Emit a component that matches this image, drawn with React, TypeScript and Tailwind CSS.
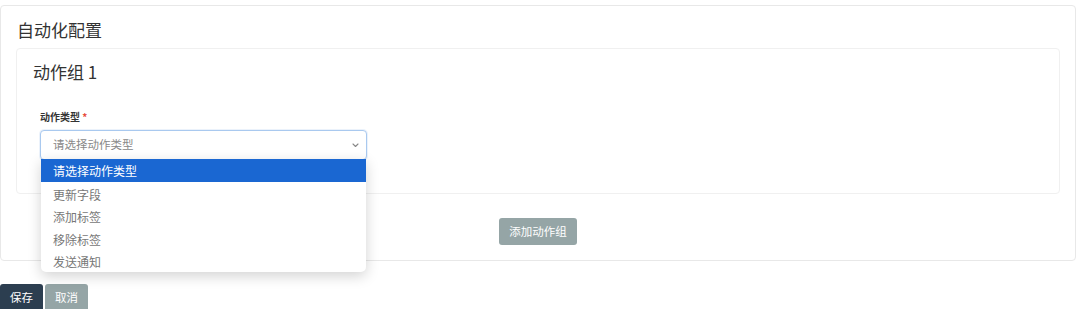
import React from 'react';

const options = ['请选择动作类型', '更新字段', '添加标签', '移除标签', '发送通知'];

const ActionTypeSelect = () => {
  return (
    <div className="relative w-[327px]">
      <div className="h-[30px] border border-[#a9c9ef] rounded-[4px] shadow-[0_0_0_1px_rgba(120,170,230,0.15)] flex items-center justify-between pl-[12px] pr-[7px] bg-white">
        <span className="text-[11.5px] text-[#888]">请选择动作类型</span>
        <svg width="7" height="5" viewBox="0 0 7 5" fill="none">
          <path d="M1 1l2.5 2.5L6 1" stroke="#888" strokeWidth="1.1" strokeLinecap="round" strokeLinejoin="round" />
        </svg>
      </div>
      <ul className="absolute left-[1px] top-[29px] w-[325px] bg-white rounded-b-[5px] shadow-[0_4px_14px_rgba(0,0,0,0.18)] overflow-hidden z-10">
        {options.map((opt, i) => (
          <li
            key={opt}
            className={
              i === 0
                ? 'h-[23px] flex items-center pl-[12px] text-[12px] bg-[#1a67d2] text-white'
                : 'h-[22.5px] flex items-center pl-[12px] pt-[3px] text-[12px] text-[#777]'
            }
          >
            {opt}
          </li>
        ))}
      </ul>
    </div>
  );
};

const App: React.FC = () => {
  return (
    <div
      className="w-[1080px] h-[309px] overflow-hidden bg-white pt-[5px]"
      style={{ fontFamily: '"Noto Sans CJK SC", "Noto Sans", sans-serif' }}
    >
      <div className="w-[1076px] h-[256px] border border-[#e8e8e8] rounded-[4px] px-[15px] pt-[12px]">
        <h2 className="text-[17px] leading-[24px] text-[#333] mb-[6px] pl-[1px]">自动化配置</h2>
        <div className="h-[146px] border border-[#f0f0f0] rounded-[4px] px-[16px] pt-[11px]">
          <h3 className="text-[17px] leading-[24px] text-[#333]">动作组 1</h3>
          <div className="ml-[7px] mt-[26px]">
            <label className="block text-[10px] leading-[14px] font-bold text-[#333] mb-[6px]">
              动作类型 <span className="text-[#e74c3c]">*</span>
            </label>
            <ActionTypeSelect />
          </div>
        </div>
        <div className="flex justify-center mt-[24px]">
          <button className="h-[27px] w-[78px] rounded-[3px] bg-[#95a5a6] text-white text-[11.5px]">
            添加动作组
          </button>
        </div>
      </div>
      <div className="flex gap-[2px] mt-[23px]">
        <button className="h-[27px] w-[43px] rounded-[3px] bg-[#2c3e50] text-white text-[11.5px]">保存</button>
        <button className="h-[27px] w-[43px] rounded-[3px] bg-[#95a5a6] text-white text-[11.5px]">取消</button>
      </div>
    </div>
  );
};

export default App;
